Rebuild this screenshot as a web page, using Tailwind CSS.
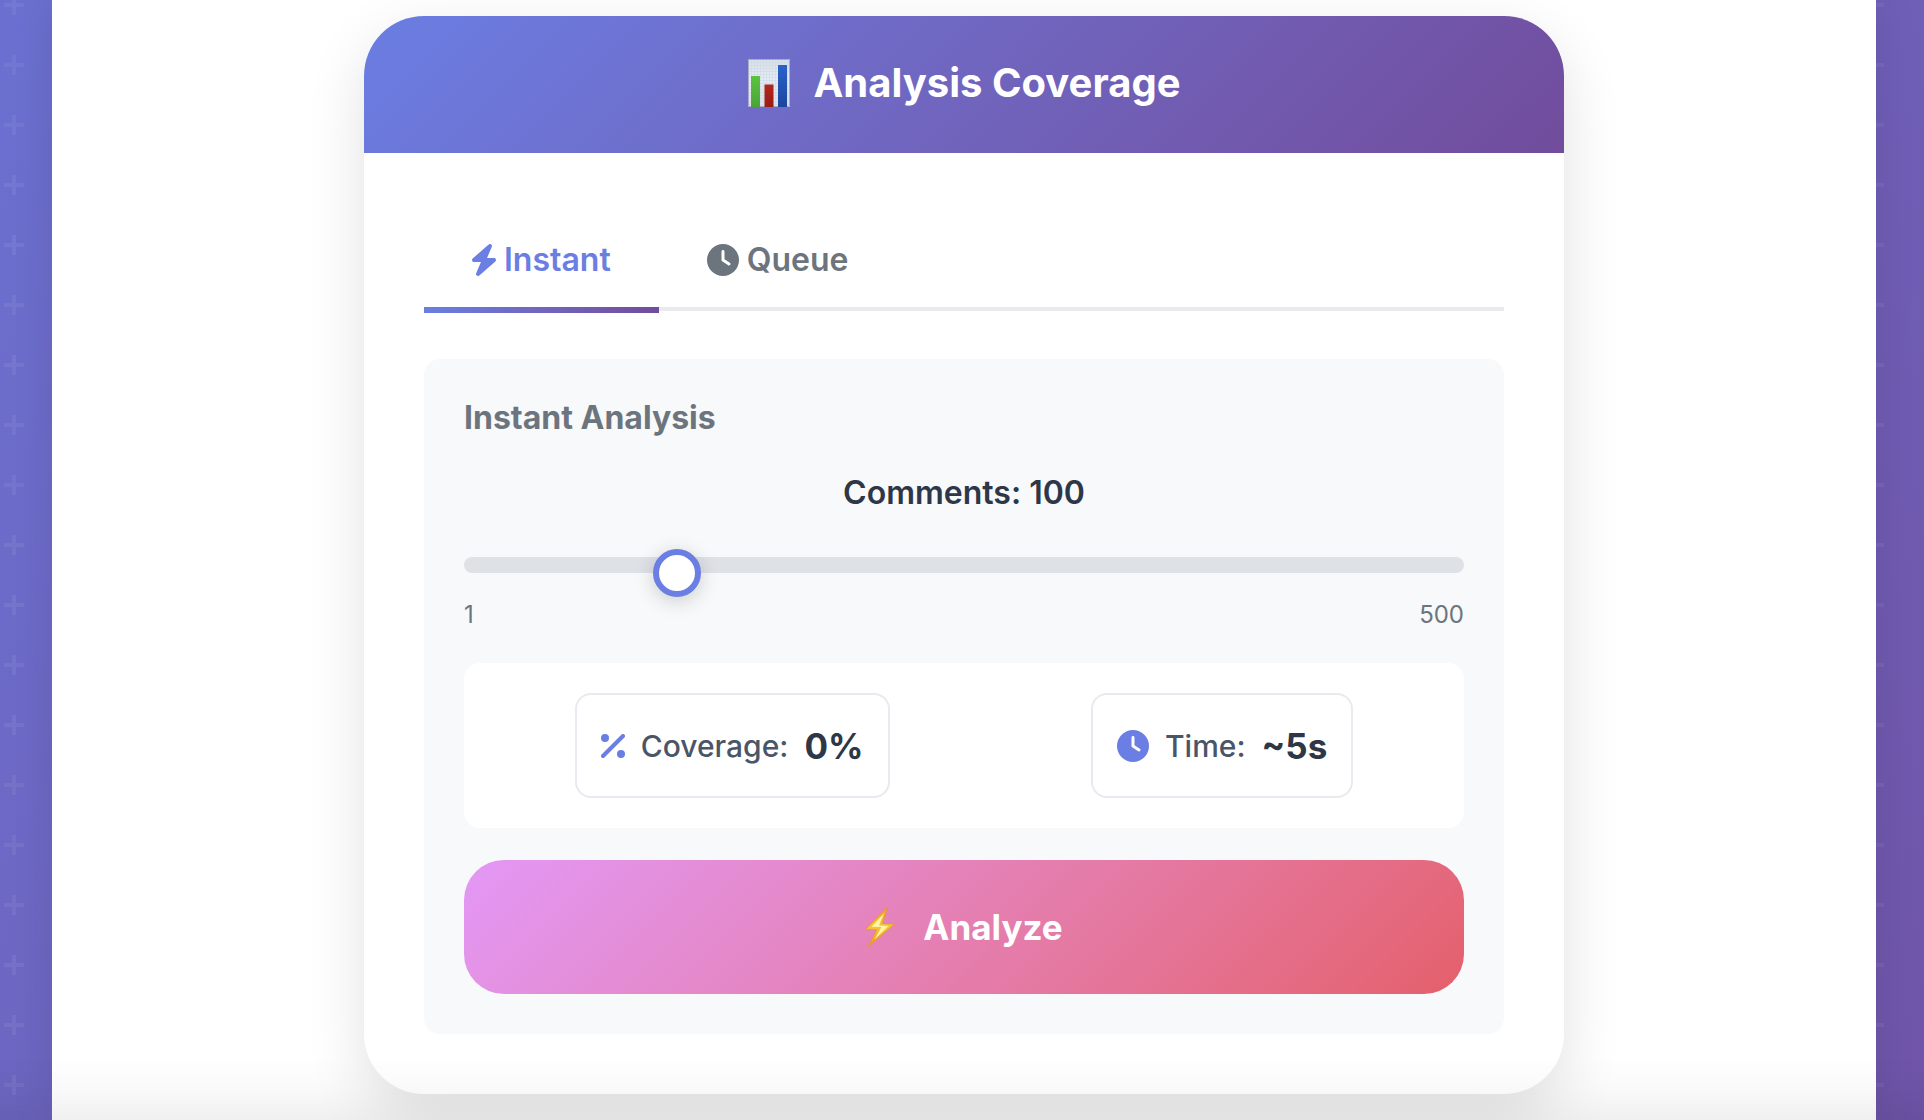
<!DOCTYPE html>
<html lang="en">
<head>
<meta charset="utf-8">
<meta name="viewport" content="width=device-width, initial-scale=1">
<title>Analysis Coverage</title>
<script src="https://cdn.jsdelivr.net/npm/@tailwindcss/browser@4"></script>
</head>
<body class="relative min-h-screen bg-linear-135 from-[#6b70d0] to-[#7055a9] font-['Inter',sans-serif] text-[#2d3748]">
<!-- plus-sign pattern behind the page -->
<svg class="absolute inset-0 size-full" aria-hidden="true">
  <defs>
    <pattern id="plus" x="4" y="-5" width="60" height="60" patternUnits="userSpaceOnUse">
      <path d="M8 0h4v8h8v4h-8v8H8v-8H0V8h8z" fill="#fff" fill-opacity=".06"/>
    </pattern>
  </defs>
  <rect width="100%" height="100%" fill="url(#plus)"/>
</svg>

<main class="relative ml-13 mr-12 min-h-screen bg-white pt-4 pb-6 shadow-[0_0_40px_rgba(0,0,0,0.1)]">
  <section class="mx-auto max-w-[1200px] overflow-hidden rounded-[60px] bg-white shadow-[0_20px_60px_rgba(0,0,0,0.12)]">
    <header class="flex h-[137px] items-center justify-center gap-6 bg-linear-135 from-[#6a7ee3] to-[#714c9c] pb-[3px] text-white">
      <svg class="h-12 w-[42px]" viewBox="0 0 42 48" aria-hidden="true">
        <defs>
          <linearGradient id="paper" x2="0" y2="1"><stop stop-color="#d9dfe8"/><stop offset=".4" stop-color="#e3ecf4"/><stop offset="1" stop-color="#dde2ec"/></linearGradient>
          <linearGradient id="green" x2="0" y2="1"><stop stop-color="#5cc43c"/><stop offset="1" stop-color="#4aa43a"/></linearGradient>
          <linearGradient id="red" x2="0" y2="1"><stop stop-color="#b3261c"/><stop offset="1" stop-color="#981c16"/></linearGradient>
          <linearGradient id="blue" x2="0" y2="1"><stop stop-color="#2a62cc"/><stop offset="1" stop-color="#1c469c"/></linearGradient>
          <pattern id="grid" width="3" height="3" patternUnits="userSpaceOnUse"><path d="M0 .5h3M.5 0v3" stroke="#ccd7e3" stroke-width=".5"/></pattern>
        </defs>
        <path fill="url(#paper)" d="M0 0h42v48H0z"/>
        <path fill="url(#grid)" d="M0 0h42v48H0z"/>
        <path fill="none" stroke="#a9acc4" d="M.5.5h41v47H.5z"/>
        <path fill="url(#green)" d="M3 17h9v31H3z"/>
        <path fill="url(#red)" d="M16.500 25.500h9V48h-9z"/>
        <path fill="url(#blue)" d="M30 6h9v42h-9z"/>
      </svg>
      <h1 class="text-[40px] leading-[52px] font-bold">Analysis Coverage</h1>
    </header>

    <div class="p-15">
      <div class="flex border-b-4 border-[#e9eaee]" role="tablist">
        <button type="button" role="tab" aria-selected="true" class="relative flex h-[94px] items-center gap-2 px-12 text-[32px] leading-10 font-semibold text-[#6a7ee3] after:absolute after:inset-x-0 after:top-full after:h-[6px] after:bg-linear-to-r after:from-[#6a7ee3] after:to-[#714c9c]">
          <svg class="h-8 w-6" viewBox="32 0 384 512" fill="currentColor" aria-hidden="true"><path d="M349.400 44.600c5.900-13.700 1.500-29.700-10.600-38.500s-28.600-8-39.900 1.800l-256 224c-10 8.800-13.600 22.900-8.900 35.300S50.700 288 64 288H175.500L98.600 467.400c-5.900 13.700-1.500 29.700 10.600 38.500s28.600 8 39.900-1.800l256-224c10-8.800 13.600-22.900 8.900-35.300s-16.600-20.700-30-20.700H272.500L349.400 44.600z"/></svg>
          Instant
        </button>
        <button type="button" role="tab" aria-selected="false" class="flex h-[94px] items-center gap-2 px-12 text-[32px] leading-10 font-semibold text-[#6c757d]">
          <svg class="size-8" viewBox="0 0 512 512" fill="currentColor" aria-hidden="true"><path d="M256 0a256 256 0 1 1 0 512A256 256 0 1 1 256 0zM232 120V256c0 8 4 15.500 10.700 20l96 64c11 7.400 25.900 4.400 33.300-6.700s4.400-25.900-6.700-33.300L280 243.200V120c0-13.300-10.700-24-24-24s-24 10.700-24 24z"/></svg>
          Queue
        </button>
      </div>

      <div class="mt-12 rounded-2xl bg-[#f8f9fb] p-10">
        <h2 class="text-[32px] leading-[38px] font-bold text-[#6c757d]">Instant Analysis</h2>
        <label for="comments" class="mt-9 block text-center text-[32px] leading-10 font-semibold">Comments: 100</label>
        <input id="comments" type="range" min="1" max="500" value="100" class="mt-11 block h-4 w-full appearance-none rounded-lg bg-[#dee1e6] [&::-webkit-slider-runnable-track]:h-4 [&::-webkit-slider-thumb]:-mt-2 [&::-webkit-slider-thumb]:size-12 [&::-webkit-slider-thumb]:appearance-none [&::-webkit-slider-thumb]:rounded-full [&::-webkit-slider-thumb]:border-6 [&::-webkit-slider-thumb]:border-solid [&::-webkit-slider-thumb]:border-[#6a7ee3] [&::-webkit-slider-thumb]:bg-white [&::-webkit-slider-thumb]:shadow-[0_4px_20px_rgba(0,0,0,0.18)]">
        <div class="mt-6 flex justify-between text-2xl leading-9 text-[#6c757d]">
          <span>1</span><span>500</span>
        </div>

        <div class="mt-[30px] flex flex-wrap justify-around gap-10 rounded-2xl bg-white p-[30px]">
          <div class="flex h-[105px] items-center gap-4 rounded-2xl border-2 border-[#e9eaef] px-6">
            <svg class="size-6" viewBox="0 0 24 24" aria-hidden="true"><g fill="#6a7ee3"><circle cx="4" cy="4" r="4"/><circle cx="20" cy="20" r="4"/></g><path d="M2 22 22 2" stroke="#6a7ee3" stroke-width="4" stroke-linecap="round"/></svg>
            <span class="text-[30px] leading-10 font-medium text-[#4a5568]">Coverage:</span>
            <strong class="text-[35px] leading-10 font-bold">0%</strong>
          </div>
          <div class="flex h-[105px] items-center gap-4 rounded-2xl border-2 border-[#e9eaef] px-6">
            <svg class="size-8 text-[#6a7ee3]" viewBox="0 0 512 512" fill="currentColor" aria-hidden="true"><path d="M256 0a256 256 0 1 1 0 512A256 256 0 1 1 256 0zM232 120V256c0 8 4 15.500 10.700 20l96 64c11 7.400 25.900 4.400 33.300-6.700s4.400-25.900-6.700-33.300L280 243.200V120c0-13.300-10.700-24-24-24s-24 10.700-24 24z"/></svg>
            <span class="text-[30px] leading-10 font-medium text-[#4a5568]">Time:</span>
            <strong class="text-[35px] leading-10 font-bold">~5s</strong>
          </div>
        </div>

        <button type="button" class="mt-8 flex h-[134px] w-full items-center justify-center gap-7 rounded-[40px] bg-linear-135 from-[#e398f6] to-[#e4606b] text-[35px] leading-10 font-bold text-white">
          <svg class="h-10 w-[30px]" viewBox="0 0 30 40" aria-hidden="true">
            <defs><linearGradient id="bolt" x2="0" y2="1"><stop stop-color="#f0a22c"/><stop offset=".5" stop-color="#f6c43a"/><stop offset="1" stop-color="#e8962a"/></linearGradient></defs>
            <path fill="url(#bolt)" stroke="#e8952c" stroke-width=".8" stroke-linejoin="round" d="M22.500 0 .5 22.500l11 .3L3 40 29.500 17l-12-.6z"/>
            <path fill="#fff6a6" d="M19 6.500 6.500 19.800l10 .2-7 12.500L23.500 19l-9.500-.5z"/>
          </svg>
          Analyze
        </button>
      </div>
    </div>
  </section>
</main>

<div class="pointer-events-none fixed inset-x-0 bottom-0 h-16 bg-linear-to-t from-black/6 via-black/2 to-transparent"></div>
</body>
</html>
